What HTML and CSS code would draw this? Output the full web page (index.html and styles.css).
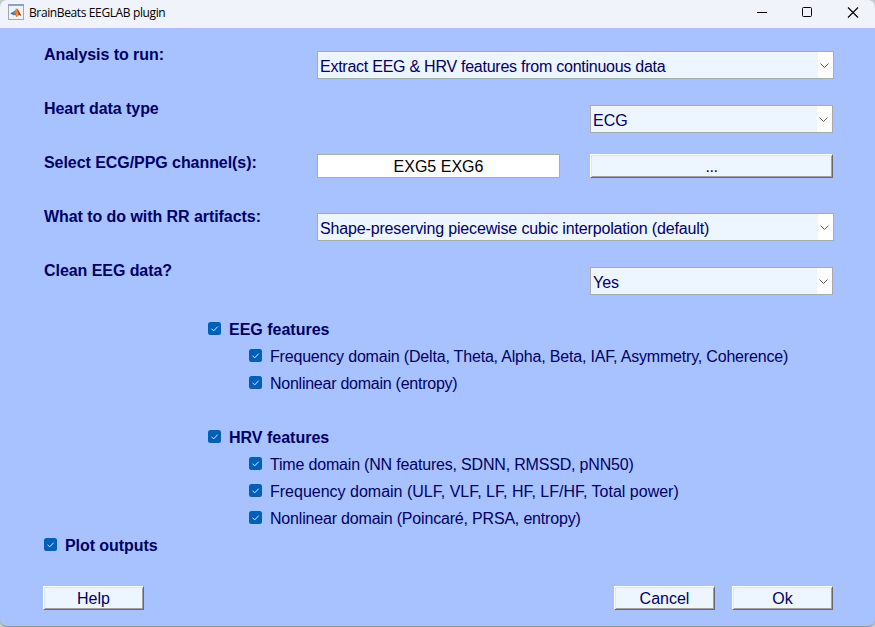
FILE: index.html
```html
<!DOCTYPE html>
<html lang="en">
<head>
<meta charset="utf-8">
<title>BrainBeats EEGLAB plugin</title>
<link rel="stylesheet" href="styles.css">
</head>
<body>
<div class="window">
  <header class="titlebar">
    <svg class="app-icon" width="16" height="16" viewBox="0 0 16 16">
      <rect x=".5" y=".5" width="15" height="15" fill="#f1f2f4" stroke="#a3a8ae"/>
      <path d="M0 0h16v2H0z" fill="#86a5c2"/>
      <path d="M2.300 9.300l3-1.500 1.700 2-1.700 1.400z" fill="#2f78b0"/>
      <path d="M5 7.800l1.700-1 2-2.600-1.700 5.600z" fill="#4b91b5"/>
      <path d="M5.300 11.200l1.700-1.600 1.700-5.200 1 .6 3.500 6.800-2-.9-2.700 2.200-1.300-2z" fill="#dd5a22"/>
      <path d="M8.700 4.300l-.5 5 .4 3.700 1.400-1.200z" fill="#f2a03a"/>
      <path d="M9.600 4.900l3.600 6.900-1.500-.7z" fill="#9c2b16"/>
    </svg>
    <span class="title">BrainBeats EEGLAB plugin</span>
    <svg class="controls" width="110" height="28" viewBox="0 0 110 28" fill="none" stroke="#000">
      <path d="M5 12.500h10"/>
      <rect x="50.500" y="7.500" width="9" height="9" rx="1"/>
      <path d="M96 7.500l10 10M106 7.500l-10 10" stroke-width="1.100"/>
    </svg>
  </header>
  <main class="dialog">
    <div class="row">
      <label class="heading">Analysis to run:</label>
      <div class="select wide"><span class="value tight">Extract EEG &amp; HRV features from continuous data</span><span class="arrow"><svg width="9" height="6" viewBox="0 0 9 6"><path d="M.5 .5l4 4 4-4"/></svg></span></div>
    </div>
    <div class="row">
      <label class="heading">Heart data type</label>
      <div class="select"><span class="value">ECG</span><span class="arrow"><svg width="9" height="6" viewBox="0 0 9 6"><path d="M.5 .5l4 4 4-4"/></svg></span></div>
    </div>
    <div class="row channels">
      <label class="heading">Select ECG/PPG channel(s):</label>
      <div class="input">EXG5 EXG6</div>
      <div class="button dots">...</div>
    </div>
    <div class="row">
      <label class="heading">What to do with RR artifacts:</label>
      <div class="select wide"><span class="value snug">Shape-preserving piecewise cubic interpolation (default)</span><span class="arrow"><svg width="9" height="6" viewBox="0 0 9 6"><path d="M.5 .5l4 4 4-4"/></svg></span></div>
    </div>
    <div class="row">
      <label class="heading">Clean EEG data?</label>
      <div class="select"><span class="value">Yes</span><span class="arrow"><svg width="9" height="6" viewBox="0 0 9 6"><path d="M.5 .5l4 4 4-4"/></svg></span></div>
    </div>
    <div class="checks">
      <div class="check group"><svg class="box" viewBox="0 0 13 13"><path d="M3.500 6.700l2.200 2.200 4-4.300"/></svg><span>EEG features</span></div>
      <div class="check"><svg class="box" viewBox="0 0 13 13"><path d="M3.500 6.700l2.200 2.200 4-4.300"/></svg><span class="close">Frequency domain (Delta, Theta, Alpha, Beta, IAF, Asymmetry, Coherence)</span></div>
      <div class="check"><svg class="box" viewBox="0 0 13 13"><path d="M3.500 6.700l2.200 2.200 4-4.300"/></svg><span class="tight">Nonlinear domain (entropy)</span></div>
      <div class="check group spaced"><svg class="box" viewBox="0 0 13 13"><path d="M3.500 6.700l2.200 2.200 4-4.300"/></svg><span>HRV features</span></div>
      <div class="check"><svg class="box" viewBox="0 0 13 13"><path d="M3.500 6.700l2.200 2.200 4-4.300"/></svg><span class="close">Time domain (NN features, SDNN, RMSSD, pNN50)</span></div>
      <div class="check"><svg class="box" viewBox="0 0 13 13"><path d="M3.500 6.700l2.200 2.200 4-4.300"/></svg><span>Frequency domain (ULF, VLF, LF, HF, LF/HF, Total power)</span></div>
      <div class="check"><svg class="box" viewBox="0 0 13 13"><path d="M3.500 6.700l2.200 2.200 4-4.300"/></svg><span class="close">Nonlinear domain (Poincaré, PRSA, entropy)</span></div>
      <div class="check outer"><svg class="box" viewBox="0 0 13 13"><path d="M3.500 6.700l2.200 2.200 4-4.300"/></svg><span>Plot outputs</span></div>
    </div>
    <footer class="actions">
      <div class="button help">Help</div>
      <div class="button">Cancel</div>
      <div class="button">Ok</div>
    </footer>
  </main>
</div>
</body>
</html>
```
FILE: styles.css
```css
* { box-sizing: border-box; }
body {
  margin: 0;
  background: #c9c9c9;
  font: 16px/18px "Liberation Sans", Arial, sans-serif;
  color: #000066;
}
.window {
  width: 875px;
  height: 627px;
  overflow: hidden;
  border-radius: 7px;
  border-bottom: 1px solid #929292;
  background: #a8c2ff;
}
.titlebar {
  display: flex;
  height: 28px;
  padding: 4px 13px 0 8px;
  background: #f0f3fa;
  color: #000;
}
.title {
  margin-left: 5px;
  font: 12px/18px "Open Sans", "Noto Sans", sans-serif;
  letter-spacing: -0.38px;
  white-space: nowrap;
}
.controls { margin: -4px 0 0 auto; }
.dialog { padding: 23px 41px 0 44px; }
.row {
  display: grid;
  grid-template-columns: 273px 243px 243px;
  height: 54px;
  align-items: start;
}
.row > :nth-child(3) { margin-left: 30px; width: 243px; }
.heading {
  margin-top: -5px;
  font-weight: bold;
  letter-spacing: -0.06px;
  white-space: nowrap;
}
.select {
  grid-column: 2;
  width: 243px;
  height: 28px;
  margin-left: 273px;
  display: flex;
  border: 1px solid #ababab;
  background: #edf5ff;
}
.select.wide { width: 517px; margin-left: 0; }
.value {
  flex: 1;
  padding-left: 2px;
  line-height: 29px;
  white-space: nowrap;
}
.tight { letter-spacing: -0.25px; }
.close { letter-spacing: -0.185px; }
.snug { letter-spacing: -0.15px; }
.arrow {
  width: 15px;
  display: flex;
  align-items: center;
  justify-content: center;
  background: #fff;
}
.arrow svg { margin: 2px 1px 0 0; fill: none; stroke: #606060; }
.arrow svg { margin-right: 2px; margin-top: 2px; }
.channels .input, .channels .button { margin-top: -5px; }
.input {
  height: 24px;
  border: 1px solid #ababab;
  background: #fff;
  color: #000;
  line-height: 23px;
  text-align: center;
}
.button {
  width: 101px;
  height: 24px;
  border: 1px solid;
  border-color: #fff #696969 #696969 #fff;
  box-shadow: inset 1px 1px #e3e3e3, inset -1px -1px #a0a0a0;
  background: #edf5ff;
  line-height: 23px;
  text-align: center;
}
.dots { letter-spacing: -0.4px; }
.checks { margin-top: -5px; }
.check {
  display: flex;
  align-items: center;
  height: 27px;
  padding-left: 205px;
  white-space: nowrap;
}
.check.group, .check.outer { font-weight: bold; }
.check.group { padding-left: 164px; }
.check.outer { padding-left: 0; letter-spacing: -0.06px; }
.check.spaced { margin-top: 27px; }
.box {
  width: 13px;
  height: 13px;
  margin: 0 8px 2px 0;
  border-radius: 2.5px;
  background: #005fb8;
  fill: none;
  stroke: #d8e8f6;
}
.actions { display: flex; margin: 27px 1px 0 -1px; }
.actions .button { margin-left: 17px; }
.actions .help { margin: 0 auto 0 0; }
```
